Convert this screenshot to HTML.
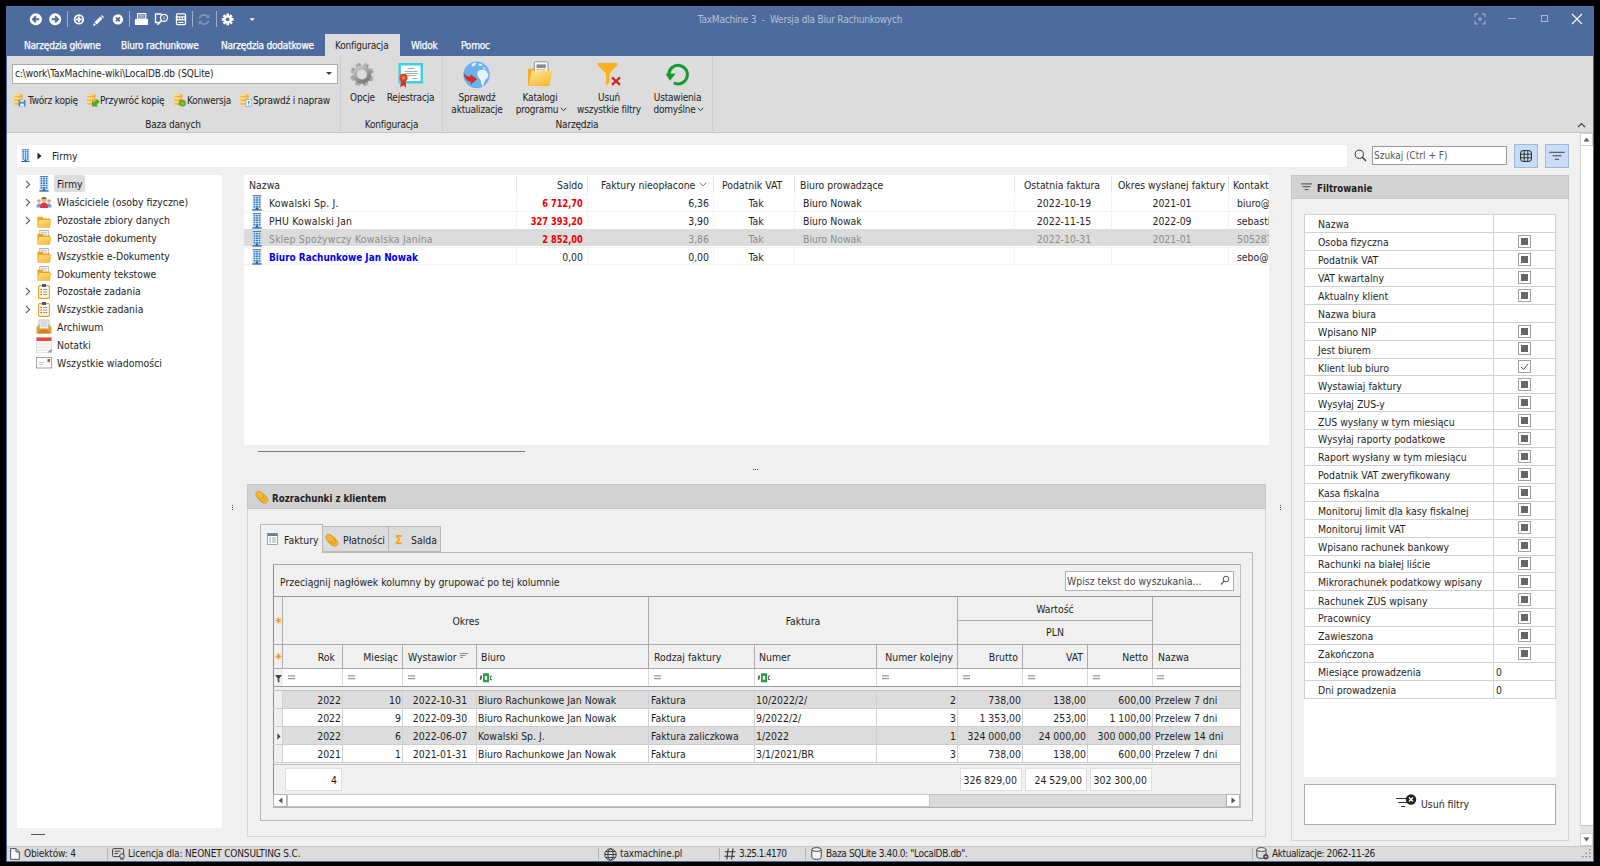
<!DOCTYPE html><html lang="pl"><head><meta charset="utf-8"><title>TaxMachine 3 - Wersja dla Biur Rachunkowych</title><style>
*{box-sizing:border-box;margin:0;padding:0}
html,body{width:1600px;height:866px;overflow:hidden;background:#000}
body{position:relative;font-family:"DejaVu Sans Condensed","Liberation Sans",sans-serif;font-size:10.4px;color:#1e1e1e}
div,svg{position:absolute}
.t{height:16px;line-height:16px;white-space:pre}
.r{font-size:10px;letter-spacing:-0.2px;color:#222;margin-top:1px}
.r.w{-webkit-text-stroke:.25px #fff}
.w{color:#fff}
.b{font-weight:bold;transform:scaleX(.93);transform-origin:left center}
.g{color:#8c8c8c}
.red{color:#f00000;font-weight:bold;transform:scaleX(.885);transform-origin:right center}
.blue{color:#0000f0;font-weight:bold;transform:scaleX(.955);transform-origin:left center}
.s{font-size:10px;letter-spacing:-0.15px}
</style></head><body>
<div style="left:6px;top:6px;width:1588px;height:856px;background:#f0f0f0;border:1px solid #4d6b9c;border-top:0"></div>
<div style="left:6px;top:6px;width:1588px;height:50px;background:#4d6b9c"></div>
<div style="left:7px;top:56px;width:1586px;height:77px;background:#dcdcdc;border-bottom:1px solid #c6c6c6"></div>
<div style="left:7px;top:846px;width:1586px;height:15px;background:#dcdcdc;border-top:1px solid #c8c8c8"></div>
<svg style="left:29px;top:12px;" width="14" height="15" viewBox="0 0 14 15"><circle cx="6.85" cy="7.25" r="6" fill="#fff"/><path d="M10.2 7.25H4.4M6.9 4.3L3.9 7.25l3 2.95" stroke="#4d6b9c" stroke-width="1.9" fill="none"/></svg>
<svg style="left:48px;top:12px;" width="14" height="15" viewBox="0 0 14 15"><circle cx="7.2" cy="7.25" r="6" fill="#fff"/><path d="M3.8 7.25h5.8M7.1 4.3l3 2.950-3 2.950" stroke="#4d6b9c" stroke-width="1.9" fill="none"/></svg>
<div style="left:67px;top:11px;width:1px;height:16px;background:#9fafca"></div>
<svg style="left:73px;top:13px;" width="12" height="13" viewBox="0 0 12 13"><circle cx="5.95" cy="6.45" r="4.3" fill="none" stroke="#fff" stroke-width="1.7"/><path d="M5.950 3.600v5.700M3.100 6.450h5.700" stroke="#fff" stroke-width="1.9"/></svg>
<svg style="left:92px;top:13px;" width="13" height="13" viewBox="0 0 13 13"><path d="M2.600 9.200l5.600-5.600 2.200 2.200-5.600 5.600z M8.900 2.900l.9-.9 2.200 2.200-.9.900z M1.900 10l2.100 2.100-2.900.800z" fill="#fff"/></svg>
<svg style="left:112px;top:13px;" width="12" height="13" viewBox="0 0 12 13"><circle cx="5.9" cy="6.45" r="5.15" fill="#fff"/><path d="M3.900 4.450l4 4M7.900 4.450l-4 4" stroke="#4d6b9c" stroke-width="1.7"/></svg>
<div style="left:129px;top:11px;width:1px;height:16px;background:#9fafca"></div>
<svg style="left:134px;top:13px;" width="15" height="13" viewBox="0 0 15 13"><rect x="3.600" y=".500" width="8.200" height="5.600" fill="#6f88b3" stroke="#fff" stroke-width="1.1"/><path d="M5.200 2.300h5M5.200 4h5" stroke="#c9d3e4" stroke-width=".8"/><path d="M.9 6h13.100v6H.9z" fill="#fff"/></svg>
<svg style="left:154px;top:13px;" width="15" height="13" viewBox="0 0 15 13"><path d="M7.500 1H1.500v8.500h3.300" fill="none" stroke="#fff" stroke-width="1.3"/><circle cx="10" cy="4.800" r="3.500" fill="none" stroke="#fff" stroke-width="1.3"/><path d="M7.600 7.500L3.400 11.700" stroke="#fff" stroke-width="1.600"/><path d="M10 3.500v2.600" stroke="#fff" stroke-width=".9"/></svg>
<svg style="left:175px;top:13px;" width="12" height="13" viewBox="0 0 12 13"><rect x="1.500" y=".900" width="9" height="10.700" rx="1" fill="none" stroke="#fff" stroke-width="1.3"/><rect x=".9" y="3.300" width="10.200" height="4.200" fill="#fff"/><path d="M3.300 9.500h5.400" stroke="#fff" stroke-width="1"/><path d="M2.600 5.400h1.600M5.200 5.400h1.600M7.800 5.400h1.600" stroke="#4d6b9c" stroke-width="1.600"/></svg>
<div style="left:192px;top:11px;width:1px;height:16px;background:#9fafca"></div>
<svg style="left:197px;top:13px;" width="14" height="13" viewBox="0 0 14 13"><path d="M2.300 5.300a4.900 4.900 0 0 1 8.500-1.500M11.700 7.700a4.900 4.900 0 0 1-8.500 1.500" fill="none" stroke="#7f95bb" stroke-width="1.700"/><path d="M12.400 1.200v3.900H8.500zM1.600 11.800V7.900h3.900z" fill="#7f95bb"/></svg>
<div style="left:216px;top:11px;width:1px;height:16px;background:#9fafca"></div>
<svg style="left:221px;top:13px;" width="14" height="13" viewBox="0 0 14 13"><g transform="translate(6.700 6.400)"><g stroke="#fff" stroke-width="2.600"><path d="M0-5.900v11.800M-5.900 0h11.800M-4.150-4.150l8.300 8.300M4.150-4.150l-8.300 8.300"/></g><circle r="4" fill="#fff"/><circle r="1.800" fill="#4d6b9c"/></g></svg>
<svg style="left:249px;top:18px;" width="7" height="4" viewBox="0 0 7 4"><path d="M.6.200h5.200L3.200 3z" fill="#fff"/></svg>
<div class="t r" style="left:650px;width:300px;text-align:center;top:11px;color:#b5c1d8">TaxMachine 3  -  Wersja dla Biur Rachunkowych</div>
<svg style="left:1474px;top:13px;" width="12" height="12" viewBox="0 0 12 12"><path d="M1 4V1h3M8 1h3v3M11 8v3H8M4 11H1V8" fill="none" stroke="#a9b6cf" stroke-width="1"/><circle cx="6" cy="6" r="1.3" fill="none" stroke="#a9b6cf" stroke-width="1"/></svg>
<div style="left:1508px;top:18px;width:8px;height:1px;background:#a9b6cf"></div>
<div style="left:1541px;top:15px;width:7px;height:7px;border:1px solid #a9b6cf"></div>
<svg style="left:1571px;top:13px;" width="12" height="12" viewBox="0 0 12 12"><path d="M1 1l10 10M11 1L1 11" stroke="#f4f6fa" stroke-width="1.2"/></svg>
<div style="left:325px;top:34px;width:75px;height:23px;background:#dcdcdc"></div>
<div class="t r w" style="left:24px;top:37px;">Narzędzia główne</div>
<div class="t r w" style="left:121px;top:37px;">Biuro rachunkowe</div>
<div class="t r w" style="left:221px;top:37px;">Narzędzia dodatkowe</div>
<div class="t r" style="left:335px;top:37px;">Konfiguracja</div>
<div class="t r w" style="left:411px;top:37px;">Widok</div>
<div class="t r w" style="left:461px;top:37px;">Pomoc</div>
<div style="left:12px;top:64px;width:326px;height:20px;background:#fff;border:1px solid #ababab"></div>
<div class="t r" style="left:15px;top:65px;letter-spacing:-0.08px">c:\work\TaxMachine-wiki\LocalDB.db (SQLite)</div>
<svg style="left:326px;top:72px;" width="7" height="4" viewBox="0 0 7 4"><path d="M0 0h6L3 3z" fill="#444"/></svg>
<svg style="left:13px;top:93px;" width="14" height="14" viewBox="0 0 14 14"><defs><linearGradient id="dbg" x1="0" y1="0" x2="1" y2="1"><stop offset="0" stop-color="#fdd868"/><stop offset="1" stop-color="#ee9b1c"/></linearGradient></defs><g fill="url(#dbg)"><rect x="1" y="1.200" width="8.800" height="3.400" rx="1.300"/><rect x="1" y="4.800" width="8.800" height="3.400" rx="1.300"/><rect x="1" y="8.400" width="8.800" height="3.400" rx="1.300"/></g><path d="M1.500 2.300h5M1.500 5.700h5M1.500 9.100h5" stroke="#fff0b8" stroke-width=".8"/><rect x="5.600" y="7" width="6.800" height="6.400" rx=".6" fill="#3f86d3"/><rect x="7.200" y="7" width="3.600" height="2" fill="#cfe2f7"/><rect x="7.200" y="10.600" width="3.600" height="2.800" fill="#fff"/></svg>
<div class="t r" style="left:28px;top:92px;">Twórz kopię</div>
<svg style="left:86px;top:93px;" width="14" height="14" viewBox="0 0 14 14"><defs><linearGradient id="dbg" x1="0" y1="0" x2="1" y2="1"><stop offset="0" stop-color="#fdd868"/><stop offset="1" stop-color="#ee9b1c"/></linearGradient></defs><g fill="url(#dbg)"><rect x="1" y="1.200" width="8.800" height="3.400" rx="1.300"/><rect x="1" y="4.800" width="8.800" height="3.400" rx="1.300"/><rect x="1" y="8.400" width="8.800" height="3.400" rx="1.300"/></g><path d="M1.500 2.300h5M1.500 5.700h5M1.500 9.100h5" stroke="#fff0b8" stroke-width=".8"/><path d="M12.300 7.200L13.800 8.700 10.600 11.900 12.400 13.400H6V7.600l1.800 1.600 3.200-3.200z" fill="#55a820"/></svg>
<div class="t r" style="left:100px;top:92px;">Przywróć kopię</div>
<svg style="left:173px;top:93px;" width="14" height="14" viewBox="0 0 14 14"><defs><linearGradient id="dbg" x1="0" y1="0" x2="1" y2="1"><stop offset="0" stop-color="#fdd868"/><stop offset="1" stop-color="#ee9b1c"/></linearGradient></defs><g fill="url(#dbg)"><rect x="1" y="1.200" width="8.800" height="3.400" rx="1.300"/><rect x="1" y="4.800" width="8.800" height="3.400" rx="1.300"/><rect x="1" y="8.400" width="8.800" height="3.400" rx="1.300"/></g><path d="M1.500 2.300h5M1.500 5.700h5M1.500 9.100h5" stroke="#fff0b8" stroke-width=".8"/><path d="M5.400 9.600a3.600 3.600 0 0 1 6.200-1.500l1.100-1v3.500H9.200l1.100-1.100a2 2 0 0 0-3.200.5zM13.200 10.800a3.600 3.600 0 0 1-6.200 1.500l-1.100 1V9.800h3.500l-1.100 1.100a2 2 0 0 0 3.200-.5z" fill="#5aaa22"/></svg>
<div class="t r" style="left:187px;top:92px;">Konwersja</div>
<svg style="left:239px;top:93px;" width="14" height="14" viewBox="0 0 14 14"><defs><linearGradient id="dbg" x1="0" y1="0" x2="1" y2="1"><stop offset="0" stop-color="#fdd868"/><stop offset="1" stop-color="#ee9b1c"/></linearGradient></defs><g fill="url(#dbg)"><rect x="1" y="1.200" width="8.800" height="3.400" rx="1.300"/><rect x="1" y="4.800" width="8.800" height="3.400" rx="1.300"/><rect x="1" y="8.400" width="8.800" height="3.400" rx="1.300"/></g><path d="M1.500 2.300h5M1.500 5.700h5M1.500 9.100h5" stroke="#fff0b8" stroke-width=".8"/><rect x="7" y="6.300" width="5.600" height="7.200" fill="#f4f6fa" stroke="#9aa7bd" stroke-width=".7"/><path d="M9.800 7.800v3.200M9.800 11.800v.9" stroke="#5b8fd6" stroke-width="1.300"/></svg>
<div class="t r" style="left:253px;top:92px;">Sprawdź i napraw</div>
<div class="t r" style="left:23px;width:300px;text-align:center;top:116px;">Baza danych</div>
<div style="left:340px;top:56px;width:1px;height:75px;background:#cdcdcd"></div>
<svg style="left:350px;top:62px;overflow:visible" width="25" height="26" viewBox="0 0 25 26"><defs><linearGradient id="gg" x1="0" y1="0" x2=".6" y2="1"><stop offset="0" stop-color="#cdcdcd"/><stop offset="1" stop-color="#7e7e7e"/></linearGradient></defs><g transform="translate(12 12.500)"><g fill="url(#gg)" transform="rotate(22.500)"><rect x="-2.700" y="-12" width="5.400" height="6" rx="1.200" transform="rotate(0)"/><rect x="-2.700" y="-12" width="5.400" height="6" rx="1.200" transform="rotate(45)"/><rect x="-2.700" y="-12" width="5.400" height="6" rx="1.200" transform="rotate(90)"/><rect x="-2.700" y="-12" width="5.400" height="6" rx="1.200" transform="rotate(135)"/><rect x="-2.700" y="-12" width="5.400" height="6" rx="1.200" transform="rotate(180)"/><rect x="-2.700" y="-12" width="5.400" height="6" rx="1.200" transform="rotate(225)"/><rect x="-2.700" y="-12" width="5.400" height="6" rx="1.200" transform="rotate(270)"/><rect x="-2.700" y="-12" width="5.400" height="6" rx="1.200" transform="rotate(315)"/></g><circle r="7.100" fill="none" stroke="url(#gg)" stroke-width="4.200"/></g></svg>
<div class="t r" style="left:212.5px;width:300px;text-align:center;top:89px;">Opcje</div>
<svg style="left:398px;top:62px;" width="26" height="27" viewBox="0 0 26 27"><rect x=".4" y="1" width="24.600" height="20.500" fill="#41d0e2"/><rect x="2.900" y="3.500" width="19.600" height="15.500" fill="#fbfdff"/><path d="M9.500 6.500h6.500M6.500 9.500h13M6.500 11.500h14M8.500 13.500h10M14.500 16.500h5" stroke="#9aa3ad" stroke-width=".9"/><path d="M3.200 18.500l-1 7 3.300-2.200 2.700 2.400-.7-7.200z" fill="#d8301c"/><circle cx="5.500" cy="15.800" r="4" fill="#e2391f"/><circle cx="5.500" cy="15.800" r="2" fill="#f4734f"/></svg>
<div class="t r" style="left:260.5px;width:300px;text-align:center;top:89px;">Rejestracja</div>
<div class="t r" style="left:241.5px;width:300px;text-align:center;top:116px;">Konfiguracja</div>
<div style="left:442px;top:56px;width:1px;height:75px;background:#cdcdcd"></div>
<svg style="left:462px;top:61px;" width="30" height="28" viewBox="0 0 30 28"><circle cx="14.600" cy="13.800" r="13.200" fill="#6cb0ee"/><path d="M15.500 11C17 8.500 21 8 24 9.500L26.300 13C26.600 16 25 18 23.200 19L21.500 24.500C20 25.500 19 23 19 21 19 18 16 17 15.500 14zM9.500 3.500C11 2 13 1.500 14.500 2L13 4.500 10.500 5.500zM17 2.500L20.500 3.200 19 5.200 16.500 4.500zM21 5.500l3 2-2.500 1z" fill="#e9f2fb"/><path d="M1.500 12C4 15 6.500 16 9 15.500L8 13 15 18 9 23.500 8.700 20.500C5 21 2.500 17 1.500 12z" fill="#d92a19"/></svg>
<div class="t r" style="left:327px;width:300px;text-align:center;top:89px;">Sprawdź</div>
<div class="t r" style="left:327px;width:300px;text-align:center;top:101px;">aktualizacje</div>
<svg style="left:527px;top:61px;" width="27" height="26" viewBox="0 0 27 26"><defs><linearGradient id="fg" x1="0" y1="0" x2=".8" y2="1"><stop offset="0" stop-color="#fde598"/><stop offset="1" stop-color="#f9ba32"/></linearGradient></defs><path d="M1.100 7.800h6l1.400 1.700H22v15.500H1.100z" fill="#f5a81b"/><rect x="7.400" y=".8" width="13.600" height="11" rx="1" fill="#f7f7f7" stroke="#8c8c8c" stroke-width=".9"/><rect x="9.600" y="3.400" width="9.200" height="3.600" fill="#8c8c8c"/><path d="M9.600 8.600h9.200" stroke="#b4b4b4" stroke-width=".9"/><path d="M4.900 9.600H25.300L22.400 24.800H1.500z" fill="url(#fg)"/></svg>
<div class="t r" style="left:390px;width:300px;text-align:center;top:89px;">Katalogi</div>
<div class="t r" style="left:387px;width:300px;text-align:center;top:101px;">programu</div>
<svg style="left:560px;top:107px;" width="7" height="5" viewBox="0 0 7 5"><path d="M.7.8l2.8 2.8L6.3.8" fill="none" stroke="#333" stroke-width="1"/></svg>
<svg style="left:596px;top:62px;" width="28" height="26" viewBox="0 0 28 26"><path d="M1.500 1H21.500V3L13.400 11.800V20.500L10 23.400V11.800L1.500 3z" fill="#fbb01e"/><path d="M16 15.400l8 7.400M24 15.400l-8 7.400" stroke="#d4281c" stroke-width="2.300"/></svg>
<div class="t r" style="left:459px;width:300px;text-align:center;top:89px;">Usuń</div>
<div class="t r" style="left:459px;width:300px;text-align:center;top:101px;">wszystkie filtry</div>
<svg style="left:665px;top:62px;" width="26" height="26" viewBox="0 0 26 26"><path d="M3.800 12.600A9.300 9.300 0 1 1 8.700 20.800" fill="none" stroke="#169a2d" stroke-width="3"/><path d="M.6 11.800L10.600 11.400 5 18.800z" fill="#169a2d"/></svg>
<div class="t r" style="left:527.5px;width:300px;text-align:center;top:89px;">Ustawienia</div>
<div class="t r" style="left:524.5px;width:300px;text-align:center;top:101px;">domyślne</div>
<svg style="left:697px;top:107px;" width="7" height="5" viewBox="0 0 7 5"><path d="M.7.8l2.8 2.8L6.3.8" fill="none" stroke="#333" stroke-width="1"/></svg>
<div class="t r" style="left:427px;width:300px;text-align:center;top:116px;">Narzędzia</div>
<div style="left:712px;top:56px;width:1px;height:75px;background:#cdcdcd"></div>
<svg style="left:1577px;top:122px;" width="9" height="6" viewBox="0 0 9 6"><path d="M1 5l3.5-3.5L8 5" fill="none" stroke="#444" stroke-width="1.2"/></svg>
<div style="left:17px;top:145px;width:1330px;height:22px;background:#fff"></div>
<svg style="left:20.7px;top:148.5px" width="9" height="13.5" viewBox="0 0 10 16" preserveAspectRatio="none"><path d="M.6 0h8.800l-.6 1.200H1.200z" fill="#4a5f7a"/><rect x="1" y="1" width="8" height="12.800" fill="#eef4fb" stroke="#b7cbe2" stroke-width=".5"/><g fill="#2878c8"><rect x="1.6" y="1.8" width="1.800" height="1.600"/><rect x="1.6" y="4.1" width="1.800" height="1.600"/><rect x="1.6" y="6.3999999999999995" width="1.800" height="1.600"/><rect x="1.6" y="8.7" width="1.800" height="1.600"/><rect x="1.6" y="11.0" width="1.800" height="1.600"/><rect x="4.1" y="1.8" width="1.800" height="1.600"/><rect x="4.1" y="4.1" width="1.800" height="1.600"/><rect x="4.1" y="6.3999999999999995" width="1.800" height="1.600"/><rect x="4.1" y="8.7" width="1.800" height="1.600"/><rect x="4.1" y="11.0" width="1.800" height="1.600"/><rect x="6.6" y="1.8" width="1.800" height="1.600"/><rect x="6.6" y="4.1" width="1.800" height="1.600"/><rect x="6.6" y="6.3999999999999995" width="1.800" height="1.600"/><rect x="6.6" y="8.7" width="1.800" height="1.600"/><rect x="6.6" y="11.0" width="1.800" height="1.600"/></g><rect x="3.700" y="12.600" width="2.600" height="2" fill="#1f5fa8"/><rect x=".3" y="14.300" width="9.400" height="1.300" fill="#1f5fa8"/></svg>
<svg style="left:37px;top:152px;" width="5" height="8" viewBox="0 0 5 8"><path d="M.5.5l4 3.5-4 3.5z" fill="#222"/></svg>
<div class="t " style="left:52px;top:148px;">Firmy</div>
<svg style="left:1354px;top:149px;" width="13" height="13" viewBox="0 0 13 13"><circle cx="5.300" cy="5.300" r="4.100" fill="none" stroke="#333" stroke-width="1"/><path d="M8.300 8.300l3.700 3.700" stroke="#333" stroke-width="1.300"/></svg>
<div style="left:1372px;top:146px;width:135px;height:19px;background:#fff;border:1px solid #9a9a9a"></div>
<div class="t " style="left:1374px;top:148px;color:#555;font-size:10px">Szukaj (Ctrl + F)</div>
<div style="left:1514px;top:144px;width:24px;height:24px;background:#c9dcf5;border:1px solid #9db8dd"></div>
<svg style="left:1520px;top:150px;" width="12" height="12" viewBox="0 0 12 12"><rect x=".6" y=".600" width="10.800" height="10.800" rx="2.500" fill="none" stroke="#222" stroke-width="1"/><path d="M4.200 .6v10.800M7.800 .6v10.800M.6 4.200h10.800M.6 7.800h10.800" stroke="#222" stroke-width=".9"/></svg>
<div style="left:1545px;top:144px;width:24px;height:24px;background:#c9dcf5;border:1px solid #9db8dd"></div>
<svg style="left:1549px;top:151px;" width="16" height="10" viewBox="0 0 16 10"><path d="M.3 1.300h15.400M3.500 4.800h9M6 8.300h4" stroke="#444" stroke-width="1"/></svg>
<div style="left:1580px;top:133px;width:13px;height:713px;background:#fff;border-left:1px solid #cfcfcf"></div>
<div style="left:1580px;top:133px;width:13px;height:13px;background:#fff;border:1px solid #cfcfcf"></div>
<svg style="left:1583px;top:137px;" width="7" height="5" viewBox="0 0 7 5"><path d="M3.5.5L6.5 4.5h-6z" fill="#606060"/></svg>
<div style="left:1580px;top:825px;width:13px;height:8px;background:#e4e4e4;border-top:1px solid #c4c4c4"></div>
<div style="left:1580px;top:833px;width:13px;height:13px;background:#fff;border:1px solid #cfcfcf"></div>
<svg style="left:1583px;top:837px;" width="7" height="5" viewBox="0 0 7 5"><path d="M.5.5h6L3.5 4.5z" fill="#606060"/></svg>
<div style="left:17px;top:175px;width:205px;height:653px;background:#fff"></div>
<div style="left:31px;top:834px;width:14px;height:1px;background:#555"></div>
<div style="left:54px;top:175px;width:31px;height:17px;background:#dcdcdc;border-radius:2px"></div>
<svg style="left:25px;top:180px;" width="6" height="9" viewBox="0 0 6 9"><path d="M1 .8l3.6 3.7L1 8.2" fill="none" stroke="#606060" stroke-width="1.200"/></svg>
<div class="t " style="left:57px;top:176px;">Firmy</div>
<svg style="left:39px;top:176px" width="10" height="16" viewBox="0 0 10 16" preserveAspectRatio="none"><path d="M.6 0h8.800l-.6 1.200H1.200z" fill="#4a5f7a"/><rect x="1" y="1" width="8" height="12.800" fill="#eef4fb" stroke="#b7cbe2" stroke-width=".5"/><g fill="#2878c8"><rect x="1.6" y="1.8" width="1.800" height="1.600"/><rect x="1.6" y="4.1" width="1.800" height="1.600"/><rect x="1.6" y="6.3999999999999995" width="1.800" height="1.600"/><rect x="1.6" y="8.7" width="1.800" height="1.600"/><rect x="1.6" y="11.0" width="1.800" height="1.600"/><rect x="4.1" y="1.8" width="1.800" height="1.600"/><rect x="4.1" y="4.1" width="1.800" height="1.600"/><rect x="4.1" y="6.3999999999999995" width="1.800" height="1.600"/><rect x="4.1" y="8.7" width="1.800" height="1.600"/><rect x="4.1" y="11.0" width="1.800" height="1.600"/><rect x="6.6" y="1.8" width="1.800" height="1.600"/><rect x="6.6" y="4.1" width="1.800" height="1.600"/><rect x="6.6" y="6.3999999999999995" width="1.800" height="1.600"/><rect x="6.6" y="8.7" width="1.800" height="1.600"/><rect x="6.6" y="11.0" width="1.800" height="1.600"/></g><rect x="3.700" y="12.600" width="2.600" height="2" fill="#1f5fa8"/><rect x=".3" y="14.300" width="9.400" height="1.300" fill="#1f5fa8"/></svg>
<svg style="left:25px;top:198px;" width="6" height="9" viewBox="0 0 6 9"><path d="M1 .8l3.6 3.7L1 8.2" fill="none" stroke="#606060" stroke-width="1.200"/></svg>
<div class="t " style="left:57px;top:194px;">Właściciele (osoby fizyczne)</div>
<svg style="left:36px;top:196px;" width="16" height="12" viewBox="0 0 16 12"><circle cx="3" cy="5" r="1.8" fill="#e0a070"/><path d="M.5 11.5c0-3 1-4 2.5-4s2.500 1 2.500 4z" fill="#6a9fd8"/><circle cx="13" cy="5" r="1.800" fill="#e0a070"/><path d="M10.500 11.500c0-3 1-4 2.500-4s2.500 1 2.500 4z" fill="#6a9fd8"/><circle cx="8" cy="3.500" r="2.600" fill="#e8b080"/><path d="M5.400 2.800c.4-2 4.800-2 5.200 0z" fill="#6a4a2a"/><path d="M4 12c0-4 1.500-5.500 4-5.500s4 1.500 4 5.500z" fill="#e0354a"/></svg>
<svg style="left:25px;top:216px;" width="6" height="9" viewBox="0 0 6 9"><path d="M1 .8l3.6 3.7L1 8.2" fill="none" stroke="#606060" stroke-width="1.200"/></svg>
<div class="t " style="left:57px;top:212px;">Pozostałe zbiory danych</div>
<svg style="left:37px;top:213px" width="15" height="15" viewBox="0 0 16 14" preserveAspectRatio="none"><defs><linearGradient id="tfg" x1="0" y1="0" x2=".7" y2="1"><stop offset="0" stop-color="#fde08a"/><stop offset="1" stop-color="#f8bb37"/></linearGradient></defs><path d="M.5 3.5h5l1.3 1.7H14v8.3H.5z" fill="#eea320"/><path d="M2.4 6.500H15.500l-1.800 7H.5z" fill="url(#tfg)"/></svg>
<div class="t " style="left:57px;top:230px;">Pozostałe dokumenty</div>
<svg style="left:37px;top:230px" width="15" height="15" viewBox="0 0 16 14" preserveAspectRatio="none"><defs><linearGradient id="tfg" x1="0" y1="0" x2=".7" y2="1"><stop offset="0" stop-color="#fde08a"/><stop offset="1" stop-color="#f8bb37"/></linearGradient></defs><rect x="3" y="0.5" width="9" height="6" fill="#fafafa" stroke="#9a9a9a" stroke-width=".7"/><path d="M4.5 2.2h6M4.5 3.8h6" stroke="#aaa" stroke-width=".7"/><path d="M.5 3.5h5l1.3 1.7H14v8.3H.5z" fill="#eea320"/><path d="M2.4 6.500H15.500l-1.800 7H.5z" fill="url(#tfg)"/></svg>
<div class="t " style="left:57px;top:248px;">Wszystkie e-Dokumenty</div>
<svg style="left:37px;top:248px" width="15" height="15" viewBox="0 0 16 14" preserveAspectRatio="none"><defs><linearGradient id="tfg" x1="0" y1="0" x2=".7" y2="1"><stop offset="0" stop-color="#fde08a"/><stop offset="1" stop-color="#f8bb37"/></linearGradient></defs><rect x="3" y="0.5" width="9" height="6" fill="#fafafa" stroke="#9a9a9a" stroke-width=".7"/><path d="M4.5 2.2h6M4.5 3.8h6" stroke="#aaa" stroke-width=".7"/><path d="M.5 3.5h5l1.3 1.7H14v8.3H.5z" fill="#eea320"/><path d="M2.4 6.500H15.500l-1.800 7H.5z" fill="url(#tfg)"/></svg>
<div class="t " style="left:57px;top:266px;">Dokumenty tekstowe</div>
<svg style="left:37px;top:266px" width="15" height="15" viewBox="0 0 16 14" preserveAspectRatio="none"><defs><linearGradient id="tfg" x1="0" y1="0" x2=".7" y2="1"><stop offset="0" stop-color="#fde08a"/><stop offset="1" stop-color="#f8bb37"/></linearGradient></defs><rect x="3" y="0.5" width="9" height="6" fill="#fafafa" stroke="#9a9a9a" stroke-width=".7"/><path d="M4.5 2.2h6M4.5 3.8h6" stroke="#aaa" stroke-width=".7"/><path d="M.5 3.5h5l1.3 1.7H14v8.3H.5z" fill="#eea320"/><path d="M2.4 6.500H15.500l-1.800 7H.5z" fill="url(#tfg)"/></svg>
<svg style="left:25px;top:287px;" width="6" height="9" viewBox="0 0 6 9"><path d="M1 .8l3.6 3.7L1 8.2" fill="none" stroke="#606060" stroke-width="1.200"/></svg>
<div class="t " style="left:57px;top:283px;">Pozostałe zadania</div>
<svg style="left:38px;top:284px;" width="12" height="15" viewBox="0 0 12 15"><rect x=".6" y="1.6" width="10.8" height="12.8" rx="1" fill="#fdf7e6" stroke="#e0a526" stroke-width="1.1"/><rect x="4" y="0" width="4" height="3" fill="#3a5f8f"/><path d="M2.5 5.5h1.5M2.5 8h1.5M2.5 10.5h1.5" stroke="#d8362e" stroke-width="1.1"/><path d="M5.2 5.5h4M5.2 8h4M5.2 10.5h4" stroke="#8a8a8a" stroke-width=".9"/></svg>
<svg style="left:25px;top:305px;" width="6" height="9" viewBox="0 0 6 9"><path d="M1 .8l3.6 3.7L1 8.2" fill="none" stroke="#606060" stroke-width="1.200"/></svg>
<div class="t " style="left:57px;top:301px;">Wszystkie zadania</div>
<svg style="left:38px;top:302px;" width="12" height="15" viewBox="0 0 12 15"><rect x=".6" y="1.6" width="10.8" height="12.8" rx="1" fill="#fdf7e6" stroke="#e0a526" stroke-width="1.1"/><rect x="4" y="0" width="4" height="3" fill="#3a5f8f"/><path d="M2.5 5.5h1.5M2.5 8h1.5M2.5 10.5h1.5" stroke="#d8362e" stroke-width="1.1"/><path d="M5.2 5.5h4M5.2 8h4M5.2 10.5h4" stroke="#8a8a8a" stroke-width=".9"/></svg>
<div class="t " style="left:57px;top:319px;">Archiwum</div>
<svg style="left:36px;top:319px;overflow:visible" width="16" height="16" viewBox="0 0 16 16"><rect x="3" y="1" width="10" height="9" fill="#f4f4f4" stroke="#a9a9a9" stroke-width=".7"/><path d="M4.500 3h7M4.500 5h7M4.500 7h7" stroke="#b5b5b5" stroke-width=".8"/><path d="M.5 8l3-3v4.500h9V5l3 3v6.500H.5z" fill="#e4a13a"/><path d="M.5 14.500l5.500-4h4l5.500 4z" fill="#c98422"/></svg>
<div class="t " style="left:57px;top:337px;">Notatki</div>
<svg style="left:36px;top:337px;" width="16" height="16" viewBox="0 0 16 16"><rect x=".5" y=".5" width="15" height="15" fill="#fbfbfb" stroke="#d4d4d4" stroke-width=".6"/><rect x=".5" y=".5" width="15" height="3.500" fill="#e8473a"/><path d="M.5 7h15M.5 10h15M.5 13h11" stroke="#dcdcdc" stroke-width=".8"/><path d="M15.500 11.500v4h-4z" fill="#8d97a8"/></svg>
<div class="t " style="left:57px;top:355px;">Wszystkie wiadomości</div>
<svg style="left:36px;top:357px;" width="16" height="12" viewBox="0 0 16 12"><rect x=".5" y=".5" width="15" height="10.500" fill="#fdfdfd" stroke="#8f8f8f" stroke-width=".8"/><path d="M3 5.500h6M3 7.500h4" stroke="#bdbdbd" stroke-width=".8"/><rect x="11.500" y="2" width="2.500" height="3" fill="#d8473a"/></svg>
<div style="left:244px;top:175px;width:1025px;height:270px;background:#fff"></div>
<div style="left:258px;top:451px;width:267px;height:1px;background:#7a7a7a"></div>
<div style="left:753px;top:469px;width:1px;height:1px;background:#444"></div>
<div style="left:755px;top:469px;width:1px;height:1px;background:#444"></div>
<div style="left:757px;top:469px;width:1px;height:1px;background:#444"></div>
<div style="left:232px;top:505px;width:1px;height:1px;background:#444"></div>
<div style="left:1280px;top:505px;width:1px;height:1px;background:#444"></div>
<div style="left:232px;top:507px;width:1px;height:1px;background:#444"></div>
<div style="left:1280px;top:507px;width:1px;height:1px;background:#444"></div>
<div style="left:232px;top:509px;width:1px;height:1px;background:#444"></div>
<div style="left:1280px;top:509px;width:1px;height:1px;background:#444"></div>
<div style="left:516px;top:176px;width:1px;height:16px;background:#e3e3e3"></div>
<div style="left:516px;top:193px;width:1px;height:72px;background:#f3f3f3"></div>
<div style="left:587px;top:176px;width:1px;height:16px;background:#e3e3e3"></div>
<div style="left:587px;top:193px;width:1px;height:72px;background:#f3f3f3"></div>
<div style="left:713px;top:176px;width:1px;height:16px;background:#e3e3e3"></div>
<div style="left:713px;top:193px;width:1px;height:72px;background:#f3f3f3"></div>
<div style="left:794px;top:176px;width:1px;height:16px;background:#e3e3e3"></div>
<div style="left:794px;top:193px;width:1px;height:72px;background:#f3f3f3"></div>
<div style="left:1014px;top:176px;width:1px;height:16px;background:#e3e3e3"></div>
<div style="left:1014px;top:193px;width:1px;height:72px;background:#f3f3f3"></div>
<div style="left:1111px;top:176px;width:1px;height:16px;background:#e3e3e3"></div>
<div style="left:1111px;top:193px;width:1px;height:72px;background:#f3f3f3"></div>
<div style="left:1228px;top:176px;width:1px;height:16px;background:#e3e3e3"></div>
<div style="left:1228px;top:193px;width:1px;height:72px;background:#f3f3f3"></div>
<div style="left:244px;top:211px;width:1025px;height:1px;background:#f3f3f3"></div>
<div style="left:244px;top:229px;width:1025px;height:1px;background:#f3f3f3"></div>
<div style="left:244px;top:247px;width:1025px;height:1px;background:#f3f3f3"></div>
<div style="left:244px;top:264px;width:1025px;height:1px;background:#f3f3f3"></div>
<div style="left:244px;top:229px;width:1025px;height:17px;background:#dcdcdc"></div>
<div class="t " style="left:249px;top:177px;">Nazwa</div>
<div class="t " style="right:1017px;text-align:right;top:177px;">Saldo</div>
<div class="t " style="left:601px;top:177px;">Faktury nieopłacone</div>
<svg style="left:699px;top:182px;" width="8" height="5" viewBox="0 0 8 5"><path d="M.8.8l3.200 3L7.200.8" fill="none" stroke="#7a7a7a" stroke-width="1"/></svg>
<div class="t " style="left:722px;top:177px;">Podatnik VAT</div>
<div class="t " style="left:800px;top:177px;">Biuro prowadzące</div>
<div class="t " style="left:1024px;top:177px;">Ostatnia faktura</div>
<div class="t " style="left:1118px;top:177px;">Okres wysłanej faktury</div>
<svg style="left:252px;top:195px" width="10" height="16" viewBox="0 0 10 16" preserveAspectRatio="none"><path d="M.6 0h8.800l-.6 1.200H1.200z" fill="#4a5f7a"/><rect x="1" y="1" width="8" height="12.800" fill="#eef4fb" stroke="#b7cbe2" stroke-width=".5"/><g fill="#2878c8"><rect x="1.6" y="1.8" width="1.800" height="1.600"/><rect x="1.6" y="4.1" width="1.800" height="1.600"/><rect x="1.6" y="6.3999999999999995" width="1.800" height="1.600"/><rect x="1.6" y="8.7" width="1.800" height="1.600"/><rect x="1.6" y="11.0" width="1.800" height="1.600"/><rect x="4.1" y="1.8" width="1.800" height="1.600"/><rect x="4.1" y="4.1" width="1.800" height="1.600"/><rect x="4.1" y="6.3999999999999995" width="1.800" height="1.600"/><rect x="4.1" y="8.7" width="1.800" height="1.600"/><rect x="4.1" y="11.0" width="1.800" height="1.600"/><rect x="6.6" y="1.8" width="1.800" height="1.600"/><rect x="6.6" y="4.1" width="1.800" height="1.600"/><rect x="6.6" y="6.3999999999999995" width="1.800" height="1.600"/><rect x="6.6" y="8.7" width="1.800" height="1.600"/><rect x="6.6" y="11.0" width="1.800" height="1.600"/></g><rect x="3.700" y="12.600" width="2.600" height="2" fill="#1f5fa8"/><rect x=".3" y="14.300" width="9.400" height="1.300" fill="#1f5fa8"/></svg>
<div class="t " style="left:269px;top:195px;letter-spacing:.2px">Kowalski Sp. J.</div>
<div class="t red" style="right:1017px;text-align:right;top:195px;">6 712,70</div>
<div class="t " style="right:891px;text-align:right;top:195px;">6,36</div>
<div class="t " style="left:606px;width:300px;text-align:center;top:195px;">Tak</div>
<div class="t " style="left:803px;top:195px;">Biuro Nowak</div>
<div class="t " style="left:914px;width:300px;text-align:center;top:195px;">2022-10-19</div>
<div class="t " style="left:1022px;width:300px;text-align:center;top:195px;">2021-01</div>
<svg style="left:252px;top:213px" width="10" height="16" viewBox="0 0 10 16" preserveAspectRatio="none"><path d="M.6 0h8.800l-.6 1.200H1.200z" fill="#4a5f7a"/><rect x="1" y="1" width="8" height="12.800" fill="#eef4fb" stroke="#b7cbe2" stroke-width=".5"/><g fill="#2878c8"><rect x="1.6" y="1.8" width="1.800" height="1.600"/><rect x="1.6" y="4.1" width="1.800" height="1.600"/><rect x="1.6" y="6.3999999999999995" width="1.800" height="1.600"/><rect x="1.6" y="8.7" width="1.800" height="1.600"/><rect x="1.6" y="11.0" width="1.800" height="1.600"/><rect x="4.1" y="1.8" width="1.800" height="1.600"/><rect x="4.1" y="4.1" width="1.800" height="1.600"/><rect x="4.1" y="6.3999999999999995" width="1.800" height="1.600"/><rect x="4.1" y="8.7" width="1.800" height="1.600"/><rect x="4.1" y="11.0" width="1.800" height="1.600"/><rect x="6.6" y="1.8" width="1.800" height="1.600"/><rect x="6.6" y="4.1" width="1.800" height="1.600"/><rect x="6.6" y="6.3999999999999995" width="1.800" height="1.600"/><rect x="6.6" y="8.7" width="1.800" height="1.600"/><rect x="6.6" y="11.0" width="1.800" height="1.600"/></g><rect x="3.700" y="12.600" width="2.600" height="2" fill="#1f5fa8"/><rect x=".3" y="14.300" width="9.400" height="1.300" fill="#1f5fa8"/></svg>
<div class="t " style="left:269px;top:213px;letter-spacing:.2px">PHU Kowalski Jan</div>
<div class="t red" style="right:1017px;text-align:right;top:213px;">327 393,20</div>
<div class="t " style="right:891px;text-align:right;top:213px;">3,90</div>
<div class="t " style="left:606px;width:300px;text-align:center;top:213px;">Tak</div>
<div class="t " style="left:803px;top:213px;">Biuro Nowak</div>
<div class="t " style="left:914px;width:300px;text-align:center;top:213px;">2022-11-15</div>
<div class="t " style="left:1022px;width:300px;text-align:center;top:213px;">2022-09</div>
<svg style="left:252px;top:231px" width="10" height="16" viewBox="0 0 10 16" preserveAspectRatio="none"><path d="M.6 0h8.800l-.6 1.200H1.200z" fill="#4a5f7a"/><rect x="1" y="1" width="8" height="12.800" fill="#eef4fb" stroke="#b7cbe2" stroke-width=".5"/><g fill="#2878c8"><rect x="1.6" y="1.8" width="1.800" height="1.600"/><rect x="1.6" y="4.1" width="1.800" height="1.600"/><rect x="1.6" y="6.3999999999999995" width="1.800" height="1.600"/><rect x="1.6" y="8.7" width="1.800" height="1.600"/><rect x="1.6" y="11.0" width="1.800" height="1.600"/><rect x="4.1" y="1.8" width="1.800" height="1.600"/><rect x="4.1" y="4.1" width="1.800" height="1.600"/><rect x="4.1" y="6.3999999999999995" width="1.800" height="1.600"/><rect x="4.1" y="8.7" width="1.800" height="1.600"/><rect x="4.1" y="11.0" width="1.800" height="1.600"/><rect x="6.6" y="1.8" width="1.800" height="1.600"/><rect x="6.6" y="4.1" width="1.800" height="1.600"/><rect x="6.6" y="6.3999999999999995" width="1.800" height="1.600"/><rect x="6.6" y="8.7" width="1.800" height="1.600"/><rect x="6.6" y="11.0" width="1.800" height="1.600"/></g><rect x="3.700" y="12.600" width="2.600" height="2" fill="#1f5fa8"/><rect x=".3" y="14.300" width="9.400" height="1.300" fill="#1f5fa8"/></svg>
<div class="t g" style="left:269px;top:231px;letter-spacing:.2px">Sklep Spożywczy Kowalska Janina</div>
<div class="t red" style="right:1017px;text-align:right;top:231px;">2 852,00</div>
<div class="t g" style="right:891px;text-align:right;top:231px;">3,86</div>
<div class="t g" style="left:606px;width:300px;text-align:center;top:231px;">Tak</div>
<div class="t g" style="left:803px;top:231px;">Biuro Nowak</div>
<div class="t g" style="left:914px;width:300px;text-align:center;top:231px;">2022-10-31</div>
<div class="t g" style="left:1022px;width:300px;text-align:center;top:231px;">2021-01</div>
<svg style="left:252px;top:249px" width="10" height="16" viewBox="0 0 10 16" preserveAspectRatio="none"><path d="M.6 0h8.800l-.6 1.200H1.200z" fill="#4a5f7a"/><rect x="1" y="1" width="8" height="12.800" fill="#eef4fb" stroke="#b7cbe2" stroke-width=".5"/><g fill="#2878c8"><rect x="1.6" y="1.8" width="1.800" height="1.600"/><rect x="1.6" y="4.1" width="1.800" height="1.600"/><rect x="1.6" y="6.3999999999999995" width="1.800" height="1.600"/><rect x="1.6" y="8.7" width="1.800" height="1.600"/><rect x="1.6" y="11.0" width="1.800" height="1.600"/><rect x="4.1" y="1.8" width="1.800" height="1.600"/><rect x="4.1" y="4.1" width="1.800" height="1.600"/><rect x="4.1" y="6.3999999999999995" width="1.800" height="1.600"/><rect x="4.1" y="8.7" width="1.800" height="1.600"/><rect x="4.1" y="11.0" width="1.800" height="1.600"/><rect x="6.6" y="1.8" width="1.800" height="1.600"/><rect x="6.6" y="4.1" width="1.800" height="1.600"/><rect x="6.6" y="6.3999999999999995" width="1.800" height="1.600"/><rect x="6.6" y="8.7" width="1.800" height="1.600"/><rect x="6.6" y="11.0" width="1.800" height="1.600"/></g><rect x="3.700" y="12.600" width="2.600" height="2" fill="#1f5fa8"/><rect x=".3" y="14.300" width="9.400" height="1.300" fill="#1f5fa8"/></svg>
<div class="t blue" style="left:269px;top:249px;">Biuro Rachunkowe Jan Nowak</div>
<div class="t " style="right:1017px;text-align:right;top:249px;">0,00</div>
<div class="t " style="right:891px;text-align:right;top:249px;">0,00</div>
<div class="t " style="left:606px;width:300px;text-align:center;top:249px;">Tak</div>
<div class="t " style="left:803px;top:249px;"></div>
<div class="t " style="left:914px;width:300px;text-align:center;top:249px;"></div>
<div class="t " style="left:1022px;width:300px;text-align:center;top:249px;"></div>
<div style="left:1229px;top:175px;width:40px;height:92px;overflow:hidden"><div class="t " style="left:4px;top:2px">Kontakt</div><div class="t " style="left:8px;top:20px">biuro@</div><div class="t " style="left:8px;top:38px">sebasti</div><div class="t g" style="left:8px;top:56px">505287</div><div class="t " style="left:8px;top:74px">sebo@</div></div>
<div style="left:247px;top:484px;width:1019px;height:353px;border:1px solid #d4d4d4;background:#f0f0f0"></div>
<div style="left:247px;top:484px;width:1019px;height:25px;background:#d2d2d2;border:1px solid #c6c6c6"></div>
<svg style="left:255px;top:490px;" width="14" height="14" viewBox="0 0 14 14"><g fill="#f7b733" stroke="#d9941a" stroke-width=".8"><ellipse cx="8.500" cy="9" rx="4.800" ry="3.600" transform="rotate(40 8.500 9)"/><ellipse cx="6.500" cy="7" rx="4.800" ry="3.600" transform="rotate(40 6.500 7)"/><ellipse cx="4.800" cy="5.200" rx="4.400" ry="3.300" transform="rotate(40 4.800 5.200)"/></g></svg>
<div class="t b" style="left:272px;top:490px;">Rozrachunki z klientem</div>
<div style="left:260px;top:552px;width:993px;height:269px;border:1px solid #b9b9b9;background:#f0f0f0"></div>
<div style="left:260px;top:524px;width:63px;height:29px;background:#f0f0f0;border:1px solid #b9b9b9;border-bottom:0"></div>
<div style="left:323px;top:526px;width:66px;height:26px;background:#dcdcdc;border:1px solid #b9b9b9;border-left:0"></div>
<div style="left:389px;top:526px;width:52px;height:26px;background:#dcdcdc;border:1px solid #b9b9b9;border-left:0"></div>
<svg style="left:267px;top:533px;" width="11" height="12" viewBox="0 0 11 12"><rect x=".5" y=".5" width="10" height="11" fill="#fdfdfd" stroke="#8f8f8f" stroke-width=".8"/><rect x=".5" y=".5" width="10" height="2.500" fill="#5f7f9f"/><path d="M2 5h2M5 5h4M2 7h2M5 7h4M2 9h2M5 9h4" stroke="#9a9a9a" stroke-width=".9"/></svg>
<div class="t " style="left:284px;top:532px;">Faktury</div>
<svg style="left:325px;top:533px;" width="14" height="14" viewBox="0 0 14 14"><g fill="#f7b733" stroke="#d9941a" stroke-width=".8"><ellipse cx="8.500" cy="9" rx="4.800" ry="3.600" transform="rotate(40 8.500 9)"/><ellipse cx="6.500" cy="7" rx="4.800" ry="3.600" transform="rotate(40 6.500 7)"/><ellipse cx="4.800" cy="5.200" rx="4.400" ry="3.300" transform="rotate(40 4.800 5.200)"/></g></svg>
<div class="t " style="left:343px;top:532px;">Płatności</div>
<div class="t " style="left:395px;top:532px;color:#f5a51d;font-size:12.5px;font-weight:bold;font-family:"Liberation Sans",sans-serif">Σ</div>
<div class="t " style="left:411px;top:532px;">Salda</div>
<div style="left:273px;top:564px;width:968px;height:244px;border:1px solid;border-color:#a8a8a8 #c0c0c0 #b0b0b0 #8e8e8e;background:#f0f0f0"></div>
<div class="t " style="left:280px;top:574px;">Przeciągnij nagłówek kolumny by grupować po tej kolumnie</div>
<div style="left:1065px;top:571px;width:169px;height:20px;background:#fff;border:1px solid #b0b0b0"></div>
<div class="t " style="left:1067px;top:573px;color:#444">Wpisz tekst do wyszukania...</div>
<svg style="left:1220px;top:575px;" width="10" height="11" viewBox="0 0 10 11"><circle cx="6" cy="4" r="2.800" fill="none" stroke="#555" stroke-width="1"/><path d="M4 6.200L1 9.500" stroke="#555" stroke-width="1.2"/></svg>
<div style="left:273px;top:596px;width:968px;height:1px;background:#9a9a9a"></div>
<div style="left:282px;top:597px;width:1px;height:47px;background:#ababab"></div>
<div style="left:648px;top:597px;width:1px;height:47px;background:#ababab"></div>
<div style="left:957px;top:597px;width:1px;height:47px;background:#ababab"></div>
<div style="left:1152px;top:597px;width:1px;height:47px;background:#ababab"></div>
<div style="left:957px;top:620px;width:195px;height:1px;background:#ababab"></div>
<div style="left:273px;top:644px;width:968px;height:1px;background:#ababab"></div>
<div style="left:282px;top:645px;width:1px;height:23px;background:#ababab"></div>
<div style="left:342px;top:645px;width:1px;height:23px;background:#ababab"></div>
<div style="left:402px;top:645px;width:1px;height:23px;background:#ababab"></div>
<div style="left:476px;top:645px;width:1px;height:23px;background:#ababab"></div>
<div style="left:648px;top:645px;width:1px;height:23px;background:#ababab"></div>
<div style="left:754px;top:645px;width:1px;height:23px;background:#ababab"></div>
<div style="left:876px;top:645px;width:1px;height:23px;background:#ababab"></div>
<div style="left:957px;top:645px;width:1px;height:23px;background:#ababab"></div>
<div style="left:1022px;top:645px;width:1px;height:23px;background:#ababab"></div>
<div style="left:1087px;top:645px;width:1px;height:23px;background:#ababab"></div>
<div style="left:1152px;top:645px;width:1px;height:23px;background:#ababab"></div>
<div style="left:273px;top:668px;width:968px;height:1px;background:#ababab"></div>
<div class="t " style="left:316px;width:300px;text-align:center;top:613px;">Okres</div>
<div class="t " style="left:653px;width:300px;text-align:center;top:613px;">Faktura</div>
<div class="t " style="left:905px;width:300px;text-align:center;top:601px;">Wartość</div>
<div class="t " style="left:905px;width:300px;text-align:center;top:624px;">PLN</div>
<svg style="left:274.5px;top:617px;" width="7" height="7" viewBox="0 0 7 7"><circle cx="3.500" cy="3.500" r="2" fill="#eda040"/><path d="M3.500 0v7M0 3.500h7M1 1l5 5M6 1L1 6" stroke="#eda040" stroke-width=".8"/></svg>
<svg style="left:274.5px;top:653px;" width="7" height="7" viewBox="0 0 7 7"><circle cx="3.500" cy="3.500" r="2" fill="#eda040"/><path d="M3.500 0v7M0 3.500h7M1 1l5 5M6 1L1 6" stroke="#eda040" stroke-width=".8"/></svg>
<div class="t " style="right:1265px;text-align:right;top:649px;">Rok</div>
<div class="t " style="right:1202px;text-align:right;top:649px;">Miesiąc</div>
<div class="t " style="left:408px;top:649px;">Wystawior</div>
<div class="t " style="left:481px;top:649px;">Biuro</div>
<div class="t " style="left:654px;top:649px;">Rodzaj faktury</div>
<svg style="left:460px;top:653px;" width="8" height="6" viewBox="0 0 8 6"><path d="M0 .500h8M0 2.500h5.500M0 4.500h3" stroke="#8a8a8a" stroke-width="1"/></svg>
<div class="t " style="left:759px;top:649px;">Numer</div>
<div class="t " style="right:647px;text-align:right;top:649px;">Numer kolejny</div>
<div class="t " style="right:582px;text-align:right;top:649px;">Brutto</div>
<div class="t " style="right:517px;text-align:right;top:649px;">VAT</div>
<div class="t " style="right:452px;text-align:right;top:649px;">Netto</div>
<div class="t " style="left:1158px;top:649px;">Nazwa</div>
<div style="left:283px;top:669px;width:957px;height:17px;background:#fff"></div>
<div style="left:342px;top:669px;width:1px;height:17px;background:#d8d8d8"></div>
<div style="left:402px;top:669px;width:1px;height:17px;background:#d8d8d8"></div>
<div style="left:476px;top:669px;width:1px;height:17px;background:#d8d8d8"></div>
<div style="left:648px;top:669px;width:1px;height:17px;background:#d8d8d8"></div>
<div style="left:754px;top:669px;width:1px;height:17px;background:#d8d8d8"></div>
<div style="left:876px;top:669px;width:1px;height:17px;background:#d8d8d8"></div>
<div style="left:957px;top:669px;width:1px;height:17px;background:#d8d8d8"></div>
<div style="left:1022px;top:669px;width:1px;height:17px;background:#d8d8d8"></div>
<div style="left:1087px;top:669px;width:1px;height:17px;background:#d8d8d8"></div>
<div style="left:1152px;top:669px;width:1px;height:17px;background:#d8d8d8"></div>
<div style="left:273px;top:686px;width:968px;height:1px;background:#9a9a9a"></div>
<svg style="left:275px;top:675px;" width="7" height="8" viewBox="0 0 7 8"><path d="M0 0h7L4.300 3.500V8L2.700 6.500V3.500z" fill="#444"/></svg>
<svg style="left:288px;top:675px;" width="8" height="5" viewBox="0 0 8 5"><path d="M0 .9h7M0 3.600h7" stroke="#989898" stroke-width="1.300"/></svg>
<svg style="left:348px;top:675px;" width="8" height="5" viewBox="0 0 8 5"><path d="M0 .9h7M0 3.600h7" stroke="#989898" stroke-width="1.300"/></svg>
<svg style="left:408px;top:675px;" width="8" height="5" viewBox="0 0 8 5"><path d="M0 .9h7M0 3.600h7" stroke="#989898" stroke-width="1.300"/></svg>
<svg style="left:654px;top:675px;" width="8" height="5" viewBox="0 0 8 5"><path d="M0 .9h7M0 3.600h7" stroke="#989898" stroke-width="1.300"/></svg>
<svg style="left:882px;top:675px;" width="8" height="5" viewBox="0 0 8 5"><path d="M0 .9h7M0 3.600h7" stroke="#989898" stroke-width="1.300"/></svg>
<svg style="left:963px;top:675px;" width="8" height="5" viewBox="0 0 8 5"><path d="M0 .9h7M0 3.600h7" stroke="#989898" stroke-width="1.300"/></svg>
<svg style="left:1028px;top:675px;" width="8" height="5" viewBox="0 0 8 5"><path d="M0 .9h7M0 3.600h7" stroke="#989898" stroke-width="1.300"/></svg>
<svg style="left:1093px;top:675px;" width="8" height="5" viewBox="0 0 8 5"><path d="M0 .9h7M0 3.600h7" stroke="#989898" stroke-width="1.300"/></svg>
<svg style="left:1157px;top:675px;" width="8" height="5" viewBox="0 0 8 5"><path d="M0 .9h7M0 3.600h7" stroke="#989898" stroke-width="1.300"/></svg>
<svg style="left:479px;top:673px;" width="14" height="10" viewBox="0 0 14 10"><path d="M1.400 2.600h1.700l-.700 4.200H.7z" fill="#5a5a5a"/><rect x="4" y=".3" width="6" height="9" rx=".6" fill="#2a9d44"/><rect x="5.800" y="3" width="2.300" height="3.800" fill="#f4fbf5"/><path d="M13.100 3.100h-1.700v3.500h1.700" fill="none" stroke="#444" stroke-width=".9"/></svg>
<svg style="left:757px;top:673px;" width="14" height="10" viewBox="0 0 14 10"><path d="M1.400 2.600h1.700l-.700 4.200H.7z" fill="#5a5a5a"/><rect x="4" y=".3" width="6" height="9" rx=".6" fill="#2a9d44"/><rect x="5.800" y="3" width="2.300" height="3.800" fill="#f4fbf5"/><path d="M13.100 3.100h-1.700v3.500h1.700" fill="none" stroke="#444" stroke-width=".9"/></svg>
<div style="left:283px;top:691px;width:957px;height:72px;background:#fff"></div>
<div style="left:283px;top:691px;width:957px;height:18px;background:#dcdcdc"></div>
<div style="left:273px;top:708px;width:968px;height:1px;background:#cdcdcd"></div>
<div class="t " style="right:1259px;text-align:right;top:692px;">2022</div>
<div class="t " style="right:1199px;text-align:right;top:692px;">10</div>
<div class="t " style="left:290px;width:300px;text-align:center;top:692px;">2022-10-31</div>
<div class="t " style="left:478px;top:692px;">Biuro Rachunkowe Jan Nowak</div>
<div class="t " style="left:651px;top:692px;">Faktura</div>
<div class="t " style="left:756px;top:692px;">10/2022/2/</div>
<div class="t " style="right:644px;text-align:right;top:692px;">2</div>
<div class="t " style="right:579px;text-align:right;top:692px;">738,00</div>
<div class="t " style="right:514px;text-align:right;top:692px;">138,00</div>
<div class="t " style="right:449px;text-align:right;top:692px;">600,00</div>
<div class="t " style="left:1155px;top:692px;">Przelew 7 dni</div>
<div style="left:273px;top:726px;width:968px;height:1px;background:#cdcdcd"></div>
<div class="t " style="right:1259px;text-align:right;top:710px;">2022</div>
<div class="t " style="right:1199px;text-align:right;top:710px;">9</div>
<div class="t " style="left:290px;width:300px;text-align:center;top:710px;">2022-09-30</div>
<div class="t " style="left:478px;top:710px;">Biuro Rachunkowe Jan Nowak</div>
<div class="t " style="left:651px;top:710px;">Faktura</div>
<div class="t " style="left:756px;top:710px;">9/2022/2/</div>
<div class="t " style="right:644px;text-align:right;top:710px;">3</div>
<div class="t " style="right:579px;text-align:right;top:710px;">1 353,00</div>
<div class="t " style="right:514px;text-align:right;top:710px;">253,00</div>
<div class="t " style="right:449px;text-align:right;top:710px;">1 100,00</div>
<div class="t " style="left:1155px;top:710px;">Przelew 7 dni</div>
<div style="left:283px;top:727px;width:957px;height:18px;background:#dcdcdc"></div>
<div style="left:273px;top:744px;width:968px;height:1px;background:#cdcdcd"></div>
<div class="t " style="right:1259px;text-align:right;top:728px;">2022</div>
<div class="t " style="right:1199px;text-align:right;top:728px;">6</div>
<div class="t " style="left:290px;width:300px;text-align:center;top:728px;">2022-06-07</div>
<div class="t " style="left:478px;top:728px;">Kowalski Sp. J.</div>
<div class="t " style="left:651px;top:728px;">Faktura zaliczkowa</div>
<div class="t " style="left:756px;top:728px;">1/2022</div>
<div class="t " style="right:644px;text-align:right;top:728px;">1</div>
<div class="t " style="right:579px;text-align:right;top:728px;">324 000,00</div>
<div class="t " style="right:514px;text-align:right;top:728px;">24 000,00</div>
<div class="t " style="right:449px;text-align:right;top:728px;">300 000,00</div>
<div class="t " style="left:1155px;top:728px;">Przelew 14 dni</div>
<div style="left:273px;top:762px;width:968px;height:1px;background:#cdcdcd"></div>
<div class="t " style="right:1259px;text-align:right;top:746px;">2021</div>
<div class="t " style="right:1199px;text-align:right;top:746px;">1</div>
<div class="t " style="left:290px;width:300px;text-align:center;top:746px;">2021-01-31</div>
<div class="t " style="left:478px;top:746px;">Biuro Rachunkowe Jan Nowak</div>
<div class="t " style="left:651px;top:746px;">Faktura</div>
<div class="t " style="left:756px;top:746px;">3/1/2021/BR</div>
<div class="t " style="right:644px;text-align:right;top:746px;">3</div>
<div class="t " style="right:579px;text-align:right;top:746px;">738,00</div>
<div class="t " style="right:514px;text-align:right;top:746px;">138,00</div>
<div class="t " style="right:449px;text-align:right;top:746px;">600,00</div>
<div class="t " style="left:1155px;top:746px;">Przelew 7 dni</div>
<div style="left:282px;top:691px;width:1px;height:72px;background:#d0d0d0"></div>
<div style="left:342px;top:691px;width:1px;height:72px;background:#d0d0d0"></div>
<div style="left:402px;top:691px;width:1px;height:72px;background:#d0d0d0"></div>
<div style="left:476px;top:691px;width:1px;height:72px;background:#d0d0d0"></div>
<div style="left:648px;top:691px;width:1px;height:72px;background:#d0d0d0"></div>
<div style="left:754px;top:691px;width:1px;height:72px;background:#d0d0d0"></div>
<div style="left:876px;top:691px;width:1px;height:72px;background:#d0d0d0"></div>
<div style="left:957px;top:691px;width:1px;height:72px;background:#d0d0d0"></div>
<div style="left:1022px;top:691px;width:1px;height:72px;background:#d0d0d0"></div>
<div style="left:1087px;top:691px;width:1px;height:72px;background:#d0d0d0"></div>
<div style="left:1152px;top:691px;width:1px;height:72px;background:#d0d0d0"></div>
<div style="left:273px;top:690px;width:968px;height:1px;background:#c4c4c4"></div>
<svg style="left:277px;top:733px;" width="4" height="7" viewBox="0 0 4 7"><path d="M.3.300l3.200 3.200L.3 6.700z" fill="#444"/></svg>
<div style="left:274px;top:764px;width:966px;height:30px;background:#f0f0f0;border-top:1px solid #c4c4c4"></div>
<div style="left:285px;top:768px;width:57px;height:23px;background:#fff;border:1px solid #dedede"></div>
<div class="t " style="right:1263px;text-align:right;top:772px;">4</div>
<div style="left:960px;top:768px;width:62px;height:23px;background:#fff;border:1px solid #dedede"></div>
<div class="t " style="right:583px;text-align:right;top:772px;">326 829,00</div>
<div style="left:1025px;top:768px;width:62px;height:23px;background:#fff;border:1px solid #dedede"></div>
<div class="t " style="right:518px;text-align:right;top:772px;">24 529,00</div>
<div style="left:1090px;top:768px;width:62px;height:23px;background:#fff;border:1px solid #dedede"></div>
<div class="t " style="right:453px;text-align:right;top:772px;">302 300,00</div>
<div style="left:273px;top:794px;width:967px;height:13px;background:#d9d9d9;border-top:1px solid #c4c4c4"></div>
<div style="left:273px;top:794px;width:14px;height:13px;background:#fff;border:1px solid #b4b4b4"></div>
<svg style="left:278px;top:797px;" width="5" height="7" viewBox="0 0 5 7"><path d="M4.500.500v6L.5 3.500z" fill="#555"/></svg>
<div style="left:287px;top:794px;width:643px;height:13px;background:#fff;border:1px solid #c4c4c4"></div>
<div style="left:1226px;top:794px;width:14px;height:13px;background:#fff;border:1px solid #b4b4b4"></div>
<svg style="left:1231px;top:797px;" width="5" height="7" viewBox="0 0 5 7"><path d="M.5.500v6l4-3z" fill="#555"/></svg>
<div style="left:1291px;top:175px;width:278px;height:666px;border:1px solid #d4d4d4;background:#f0f0f0"></div>
<div style="left:1291px;top:175px;width:278px;height:24px;background:#d2d2d2;border:1px solid #c6c6c6"></div>
<svg style="left:1301px;top:183px;" width="11" height="9" viewBox="0 0 11 9"><path d="M0 .9h11M1.600 3.700h7.800M3.800 6.600h3.400" stroke="#4a4a4a" stroke-width="1"/></svg>
<div class="t b" style="left:1317px;top:180px;">Filtrowanie</div>
<div style="left:1304px;top:214px;width:252px;height:563px;background:#fff"></div>
<div style="left:1304px;top:214px;width:252px;height:1px;background:#d0d0d0"></div>
<div class="t " style="left:1318px;top:216px;">Nazwa</div>
<div style="left:1304px;top:232px;width:252px;height:1px;background:#d0d0d0"></div>
<div class="t " style="left:1318px;top:234px;">Osoba fizyczna</div>
<div style="left:1518px;top:235px;width:13px;height:13px;background:#fff;border:1px solid #a0a0a0"></div>
<div style="left:1521px;top:238px;width:7px;height:7px;background:#666"></div>
<div style="left:1304px;top:250px;width:252px;height:1px;background:#d0d0d0"></div>
<div class="t " style="left:1318px;top:252px;">Podatnik VAT</div>
<div style="left:1518px;top:253px;width:13px;height:13px;background:#fff;border:1px solid #a0a0a0"></div>
<div style="left:1521px;top:256px;width:7px;height:7px;background:#666"></div>
<div style="left:1304px;top:268px;width:252px;height:1px;background:#d0d0d0"></div>
<div class="t " style="left:1318px;top:270px;">VAT kwartalny</div>
<div style="left:1518px;top:271px;width:13px;height:13px;background:#fff;border:1px solid #a0a0a0"></div>
<div style="left:1521px;top:274px;width:7px;height:7px;background:#666"></div>
<div style="left:1304px;top:286px;width:252px;height:1px;background:#d0d0d0"></div>
<div class="t " style="left:1318px;top:288px;">Aktualny klient</div>
<div style="left:1518px;top:289px;width:13px;height:13px;background:#fff;border:1px solid #a0a0a0"></div>
<div style="left:1521px;top:292px;width:7px;height:7px;background:#666"></div>
<div style="left:1304px;top:304px;width:252px;height:1px;background:#d0d0d0"></div>
<div class="t " style="left:1318px;top:306px;">Nazwa biura</div>
<div style="left:1304px;top:322px;width:252px;height:1px;background:#d0d0d0"></div>
<div class="t " style="left:1318px;top:324px;">Wpisano NIP</div>
<div style="left:1518px;top:325px;width:13px;height:13px;background:#fff;border:1px solid #a0a0a0"></div>
<div style="left:1521px;top:328px;width:7px;height:7px;background:#666"></div>
<div style="left:1304px;top:340px;width:252px;height:1px;background:#d0d0d0"></div>
<div class="t " style="left:1318px;top:342px;">Jest biurem</div>
<div style="left:1518px;top:342px;width:13px;height:13px;background:#fff;border:1px solid #a0a0a0"></div>
<div style="left:1521px;top:345px;width:7px;height:7px;background:#666"></div>
<div style="left:1304px;top:358px;width:252px;height:1px;background:#d0d0d0"></div>
<div class="t " style="left:1318px;top:360px;">Klient lub biuro</div>
<div style="left:1518px;top:360px;width:13px;height:13px;background:#fff;border:1px solid #a0a0a0"></div>
<svg style="left:1520px;top:363px;" width="9" height="8" viewBox="0 0 9 8"><path d="M1 4l2.500 2.500L8 1" fill="none" stroke="#555" stroke-width="1"/></svg>
<div style="left:1304px;top:375px;width:252px;height:1px;background:#d0d0d0"></div>
<div class="t " style="left:1318px;top:378px;">Wystawiaj faktury</div>
<div style="left:1518px;top:378px;width:13px;height:13px;background:#fff;border:1px solid #a0a0a0"></div>
<div style="left:1521px;top:381px;width:7px;height:7px;background:#666"></div>
<div style="left:1304px;top:393px;width:252px;height:1px;background:#d0d0d0"></div>
<div class="t " style="left:1318px;top:396px;">Wysyłaj ZUS-y</div>
<div style="left:1518px;top:396px;width:13px;height:13px;background:#fff;border:1px solid #a0a0a0"></div>
<div style="left:1521px;top:399px;width:7px;height:7px;background:#666"></div>
<div style="left:1304px;top:411px;width:252px;height:1px;background:#d0d0d0"></div>
<div class="t " style="left:1318px;top:414px;">ZUS wysłany w tym miesiącu</div>
<div style="left:1518px;top:414px;width:13px;height:13px;background:#fff;border:1px solid #a0a0a0"></div>
<div style="left:1521px;top:417px;width:7px;height:7px;background:#666"></div>
<div style="left:1304px;top:429px;width:252px;height:1px;background:#d0d0d0"></div>
<div class="t " style="left:1318px;top:431px;">Wysyłaj raporty podatkowe</div>
<div style="left:1518px;top:432px;width:13px;height:13px;background:#fff;border:1px solid #a0a0a0"></div>
<div style="left:1521px;top:435px;width:7px;height:7px;background:#666"></div>
<div style="left:1304px;top:447px;width:252px;height:1px;background:#d0d0d0"></div>
<div class="t " style="left:1318px;top:449px;">Raport wysłany w tym miesiącu</div>
<div style="left:1518px;top:450px;width:13px;height:13px;background:#fff;border:1px solid #a0a0a0"></div>
<div style="left:1521px;top:453px;width:7px;height:7px;background:#666"></div>
<div style="left:1304px;top:465px;width:252px;height:1px;background:#d0d0d0"></div>
<div class="t " style="left:1318px;top:467px;">Podatnik VAT zweryfikowany</div>
<div style="left:1518px;top:468px;width:13px;height:13px;background:#fff;border:1px solid #a0a0a0"></div>
<div style="left:1521px;top:471px;width:7px;height:7px;background:#666"></div>
<div style="left:1304px;top:483px;width:252px;height:1px;background:#d0d0d0"></div>
<div class="t " style="left:1318px;top:485px;">Kasa fiskalna</div>
<div style="left:1518px;top:486px;width:13px;height:13px;background:#fff;border:1px solid #a0a0a0"></div>
<div style="left:1521px;top:489px;width:7px;height:7px;background:#666"></div>
<div style="left:1304px;top:501px;width:252px;height:1px;background:#d0d0d0"></div>
<div class="t " style="left:1318px;top:503px;">Monitoruj limit dla kasy fiskalnej</div>
<div style="left:1518px;top:503px;width:13px;height:13px;background:#fff;border:1px solid #a0a0a0"></div>
<div style="left:1521px;top:506px;width:7px;height:7px;background:#666"></div>
<div style="left:1304px;top:519px;width:252px;height:1px;background:#d0d0d0"></div>
<div class="t " style="left:1318px;top:521px;">Monitoruj limit VAT</div>
<div style="left:1518px;top:521px;width:13px;height:13px;background:#fff;border:1px solid #a0a0a0"></div>
<div style="left:1521px;top:524px;width:7px;height:7px;background:#666"></div>
<div style="left:1304px;top:537px;width:252px;height:1px;background:#d0d0d0"></div>
<div class="t " style="left:1318px;top:539px;">Wpisano rachunek bankowy</div>
<div style="left:1518px;top:539px;width:13px;height:13px;background:#fff;border:1px solid #a0a0a0"></div>
<div style="left:1521px;top:542px;width:7px;height:7px;background:#666"></div>
<div style="left:1304px;top:555px;width:252px;height:1px;background:#d0d0d0"></div>
<div class="t " style="left:1318px;top:556px;">Rachunki na białej liście</div>
<div style="left:1518px;top:557px;width:13px;height:13px;background:#fff;border:1px solid #a0a0a0"></div>
<div style="left:1521px;top:560px;width:7px;height:7px;background:#666"></div>
<div style="left:1304px;top:572px;width:252px;height:1px;background:#d0d0d0"></div>
<div class="t " style="left:1318px;top:574px;">Mikrorachunek podatkowy wpisany</div>
<div style="left:1518px;top:575px;width:13px;height:13px;background:#fff;border:1px solid #a0a0a0"></div>
<div style="left:1521px;top:578px;width:7px;height:7px;background:#666"></div>
<div style="left:1304px;top:590px;width:252px;height:1px;background:#d0d0d0"></div>
<div class="t " style="left:1318px;top:593px;">Rachunek ZUS wpisany</div>
<div style="left:1518px;top:593px;width:13px;height:13px;background:#fff;border:1px solid #a0a0a0"></div>
<div style="left:1521px;top:596px;width:7px;height:7px;background:#666"></div>
<div style="left:1304px;top:608px;width:252px;height:1px;background:#d0d0d0"></div>
<div class="t " style="left:1318px;top:610px;">Pracownicy</div>
<div style="left:1518px;top:611px;width:13px;height:13px;background:#fff;border:1px solid #a0a0a0"></div>
<div style="left:1521px;top:614px;width:7px;height:7px;background:#666"></div>
<div style="left:1304px;top:626px;width:252px;height:1px;background:#d0d0d0"></div>
<div class="t " style="left:1318px;top:628px;">Zawieszona</div>
<div style="left:1518px;top:629px;width:13px;height:13px;background:#fff;border:1px solid #a0a0a0"></div>
<div style="left:1521px;top:632px;width:7px;height:7px;background:#666"></div>
<div style="left:1304px;top:644px;width:252px;height:1px;background:#d0d0d0"></div>
<div class="t " style="left:1318px;top:646px;">Zakończona</div>
<div style="left:1518px;top:647px;width:13px;height:13px;background:#fff;border:1px solid #a0a0a0"></div>
<div style="left:1521px;top:650px;width:7px;height:7px;background:#666"></div>
<div style="left:1304px;top:662px;width:252px;height:1px;background:#d0d0d0"></div>
<div class="t " style="left:1318px;top:664px;">Miesiące prowadzenia</div>
<div class="t " style="left:1496px;top:664px;">0</div>
<div style="left:1304px;top:680px;width:252px;height:1px;background:#d0d0d0"></div>
<div class="t " style="left:1318px;top:682px;">Dni prowadzenia</div>
<div class="t " style="left:1496px;top:682px;">0</div>
<div style="left:1304px;top:698px;width:252px;height:1px;background:#d0d0d0"></div>
<div style="left:1304px;top:214px;width:1px;height:484px;background:#d0d0d0"></div>
<div style="left:1555px;top:214px;width:1px;height:484px;background:#d0d0d0"></div>
<div style="left:1493px;top:214px;width:1px;height:484px;background:#d0d0d0"></div>
<div style="left:1304px;top:784px;width:252px;height:41px;background:#fff;border:1px solid #adadad"></div>
<svg style="left:1396px;top:794px;" width="22" height="16" viewBox="0 0 22 16"><path d="M0 4.500h11M2 8.500h9M5 12.500h4" stroke="#333" stroke-width="1.2"/><circle cx="15" cy="5.500" r="5.200" fill="#222"/><path d="M13 3.500l4 4M17 3.500l-4 4" stroke="#fff" stroke-width="1.300"/></svg>
<div class="t " style="left:1421px;top:796px;">Usuń filtry</div>
<svg style="left:10px;top:848px;" width="10" height="12" viewBox="0 0 10 12"><path d="M.6.600h5.400l3.400 3.400v7.400H.6z" fill="#f8f8f8" stroke="#555" stroke-width="1"/><path d="M6 .600v3.400h3.400" fill="none" stroke="#555" stroke-width="1"/></svg>
<div class="t s" style="left:24px;top:846px;">Obiektów: 4</div>
<div style="left:107px;top:848px;width:1px;height:12px;background:#b4b4b4"></div>
<svg style="left:112px;top:848px;" width="13" height="12" viewBox="0 0 13 12"><rect x=".6" y=".600" width="11" height="8" rx="1" fill="none" stroke="#444" stroke-width="1"/><path d="M2.500 3.200h6M2.500 5.500h3.500" stroke="#444" stroke-width="1"/><circle cx="10" cy="8" r="2.300" fill="#dcdcdc" stroke="#444" stroke-width="1"/><path d="M9 10v2M11 10v2" stroke="#444" stroke-width="1"/></svg>
<div class="t s" style="left:128px;top:846px;">Licencja dla: NEONET CONSULTING S.C.</div>
<div style="left:598px;top:848px;width:1px;height:12px;background:#b4b4b4"></div>
<svg style="left:604px;top:848px;" width="13" height="13" viewBox="0 0 13 13"><circle cx="6.500" cy="6.500" r="5.700" fill="none" stroke="#333" stroke-width="1"/><ellipse cx="6.500" cy="6.500" rx="2.600" ry="5.700" fill="none" stroke="#333" stroke-width="1"/><path d="M.8 6.500h11.400M1.800 3.500h9.400M1.800 9.500h9.400" stroke="#333" stroke-width=".9"/></svg>
<div class="t s" style="left:620px;top:846px;">taxmachine.pl</div>
<div style="left:719px;top:848px;width:1px;height:12px;background:#b4b4b4"></div>
<svg style="left:724px;top:848px;" width="12" height="12" viewBox="0 0 12 12"><path d="M4.200.500l-1.400 11M9 .500l-1.400 11M.8 3.800h10.700M.3 8.200h10.700" stroke="#333" stroke-width="1.1" fill="none"/></svg>
<div class="t s" style="left:739px;top:846px;letter-spacing:-0.65px">3.25.1.4170</div>
<div style="left:805px;top:848px;width:1px;height:12px;background:#b4b4b4"></div>
<svg style="left:811px;top:847px;" width="11" height="13" viewBox="0 0 11 13"><path d="M.8 2.500v8c0 2.400 9.400 2.400 9.400 0v-8" fill="#f4f4f4" stroke="#444" stroke-width="1"/><ellipse cx="5.500" cy="2.500" rx="4.700" ry="1.900" fill="#f4f4f4" stroke="#444" stroke-width="1"/></svg>
<div class="t s" style="left:826px;top:846px;letter-spacing:-0.36px">Baza SQLite 3.40.0: "LocalDB.db".</div>
<div style="left:1252px;top:848px;width:1px;height:12px;background:#b4b4b4"></div>
<svg style="left:1256px;top:847px;" width="13" height="13" viewBox="0 0 13 13"><path d="M.8 2.500v7c0 2 6 2.200 7 1.600M10 7V2.500" fill="none" stroke="#444" stroke-width="1"/><ellipse cx="5.400" cy="2.500" rx="4.600" ry="1.900" fill="#f4f4f4" stroke="#444" stroke-width="1"/><circle cx="9.800" cy="9.800" r="2.700" fill="#444"/><circle cx="9.800" cy="9.800" r="1" fill="#dcdcdc"/></svg>
<div class="t s" style="left:1272px;top:846px;letter-spacing:-0.4px">Aktualizacje: 2062-11-26</div>
<svg style="left:1582px;top:849px;" width="10" height="10" viewBox="0 0 10 10"><g fill="#8a8a8a"><rect x="7" y="0" width="1.500" height="1.500"/><rect x="7" y="3.500" width="1.500" height="1.500"/><rect x="3.500" y="3.500" width="1.500" height="1.500"/><rect x="7" y="7" width="1.500" height="1.500"/><rect x="3.500" y="7" width="1.500" height="1.500"/><rect x="0" y="7" width="1.500" height="1.500"/></g></svg>
</body></html>
